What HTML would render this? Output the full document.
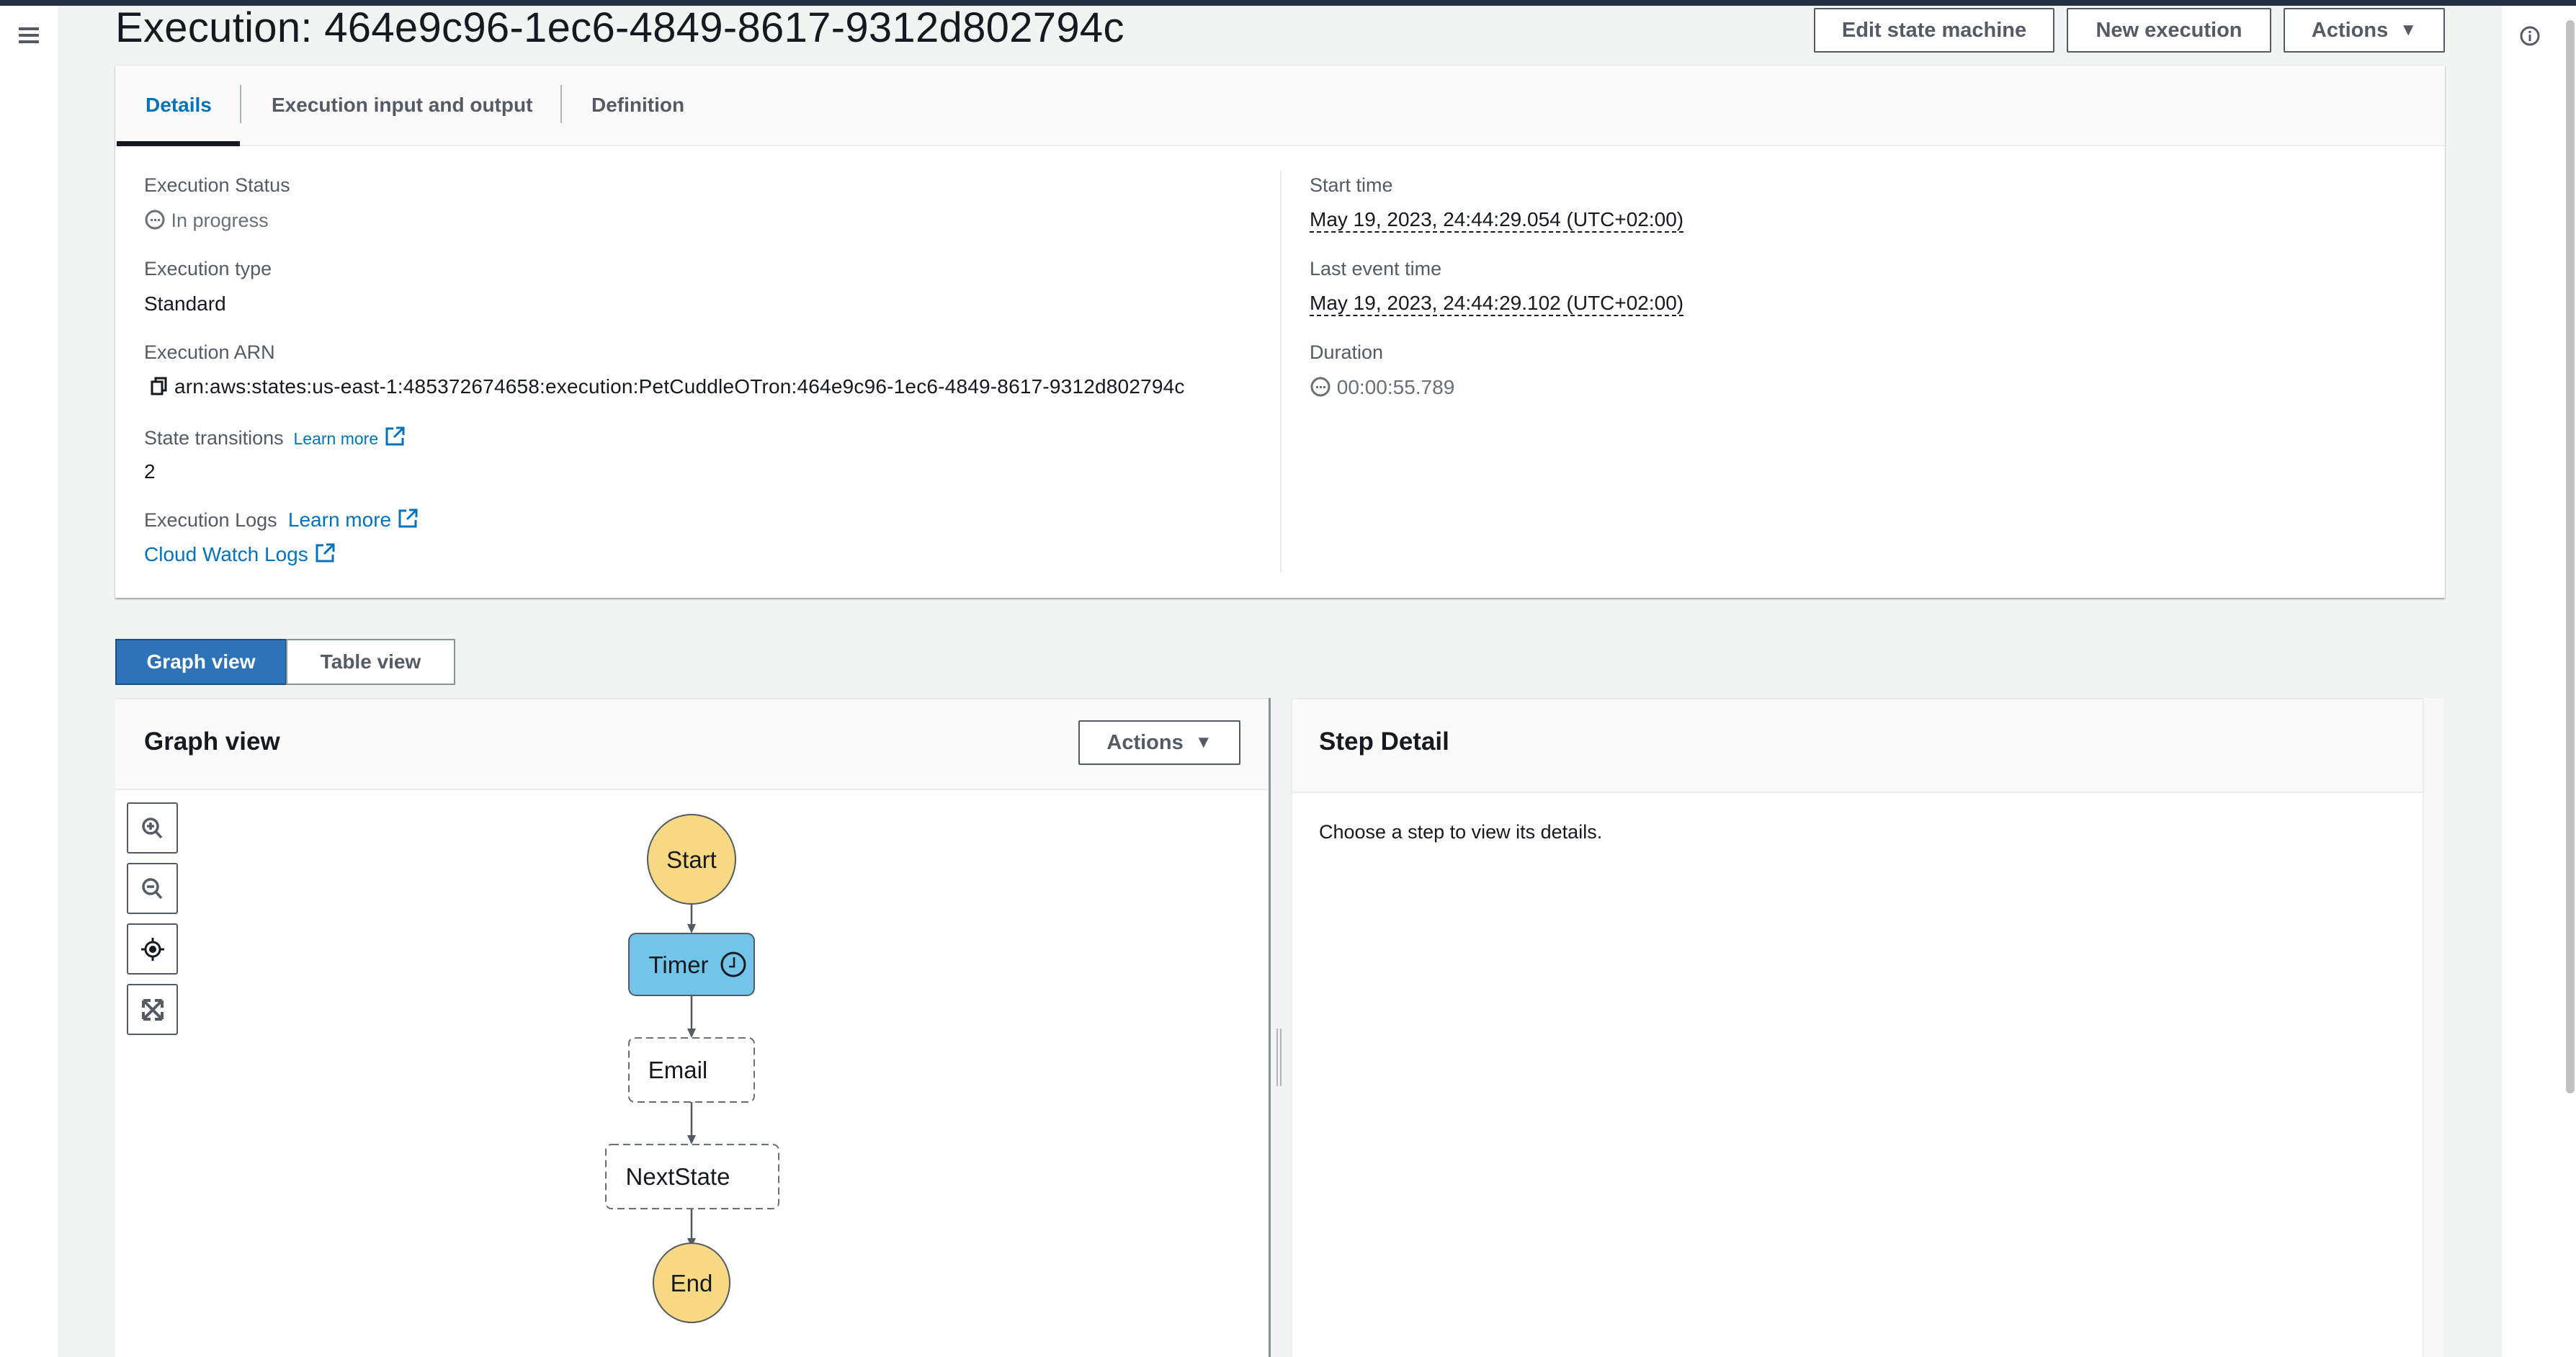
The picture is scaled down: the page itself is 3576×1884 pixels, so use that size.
<!DOCTYPE html>
<html><head><meta charset="utf-8"><style>
*{margin:0;padding:0;box-sizing:border-box}
body{width:3576px;height:1884px;overflow:hidden;background:#f2f3f3;font-family:"Liberation Sans",sans-serif;position:relative;color:#16191f}
.a{position:absolute;white-space:nowrap}
.lbl{font-size:27px;color:#545b64}
.val{font-size:28px;color:#16191f}
.link{color:#0073bb}
.btn{position:absolute;background:#fff;border:2px solid #545b64;border-radius:2px;color:#545b64;font-weight:bold;font-size:29px;display:flex;align-items:center;justify-content:center}
.dash{border-bottom:2px dashed #16191f}
</style></head><body>
<div class="a" style="left:0;top:0;width:3576px;height:8px;background:#232f3e"></div>
<div class="a" style="left:0;top:8px;width:80px;height:1876px;background:#fff"></div>
<svg class="a" style="left:26px;top:36px" width="28" height="26"><rect x="0" y="2" width="28" height="4" fill="#545b64"/><rect x="0" y="11" width="28" height="4" fill="#545b64"/><rect x="0" y="20" width="28" height="4" fill="#545b64"/></svg>
<div class="a" style="left:3473px;top:8px;width:103px;height:1876px;background:#fff"></div>
<div class="a" style="left:3562px;top:28px;width:12px;height:1490px;background:#c1c1c1;border-radius:6px"></div>
<svg class="a" style="left:3496px;top:34px" width="32" height="32"><circle cx="16" cy="16" r="12" fill="none" stroke="#545b64" stroke-width="3"/><rect x="14.5" y="14" width="3" height="9" fill="#545b64"/><rect x="14.5" y="9" width="3" height="3" fill="#545b64"/></svg>

<div class="a" style="left:160px;top:5px;font-size:58px;letter-spacing:0.3px;color:#16191f">Execution: 464e9c96-1ec6-4849-8617-9312d802794c</div>
<div class="btn" style="left:2518px;top:11px;width:334px;height:62px">Edit state machine</div>
<div class="btn" style="left:2869px;top:11px;width:284px;height:62px">New execution</div>
<div class="btn" style="left:3170px;top:11px;width:224px;height:62px">Actions&nbsp;&nbsp;<span style="font-size:24px">▼</span></div>

<div class="a" style="left:160px;top:91px;width:3234px;height:739px;background:#fff;box-shadow:0 2px 2px rgba(0,0,0,.3),0 0 1px rgba(0,0,0,.2)"></div>
<div class="a" style="left:160px;top:91px;width:3234px;height:112px;background:#fafafa;border-bottom:2px solid #eaeded"></div>
<div class="a" style="left:162px;top:196px;width:171px;height:7px;background:#16191f"></div>
<div class="a" style="left:333px;top:118px;width:2px;height:53px;background:#aab7b8"></div>
<div class="a" style="left:778px;top:118px;width:2px;height:53px;background:#aab7b8"></div>
<div class="a" style="left:202px;top:130px;font-size:28px;font-weight:bold;color:#0073bb">Details</div>
<div class="a" style="left:377px;top:130px;font-size:28px;font-weight:bold;color:#545b64">Execution input and output</div>
<div class="a" style="left:821px;top:130px;font-size:28px;font-weight:bold;color:#545b64">Definition</div>
<div class="a" style="left:1777px;top:238px;width:2px;height:556px;background:#eaeded"></div>

<div class="a lbl" style="left:200px;top:242px">Execution Status</div>
<div class="a lbl" style="left:200px;top:290px;color:#687078"><svg style="vertical-align:-5px" width="30" height="30"><circle cx="15" cy="15" r="12" fill="none" stroke="#687078" stroke-width="3"/><rect x="9" y="14" width="3" height="3" fill="#687078"/><rect x="14" y="14" width="3" height="3" fill="#687078"/><rect x="19" y="14" width="3" height="3" fill="#687078"/></svg> In progress</div>
<div class="a lbl" style="left:200px;top:358px">Execution type</div>
<div class="a val" style="left:200px;top:406px">Standard</div>
<div class="a lbl" style="left:200px;top:474px">Execution ARN</div>
<div class="a val" style="left:208px;top:521px;font-size:28px;letter-spacing:0.2px"><svg style="vertical-align:-4px" width="26" height="28"><rect x="3" y="8" width="14" height="17" fill="none" stroke="#16191f" stroke-width="3"/><path d="M8 8V3h14v17h-5" fill="none" stroke="#16191f" stroke-width="3"/></svg> arn:aws:states:us-east-1:485372674658:execution:PetCuddleOTron:464e9c96-1ec6-4849-8617-9312d802794c</div>
<div class="a lbl" style="left:200px;top:591px">State transitions <span class="link" style="font-size:23px">&nbsp;Learn more</span> <svg style="vertical-align:-4px" width="30" height="30"><path d="M13 4H4v22h22v-9" fill="none" stroke="#0073bb" stroke-width="3"/><path d="M17 3h10v10M27 3L14 16" fill="none" stroke="#0073bb" stroke-width="3"/></svg></div>
<div class="a val" style="left:200px;top:639px">2</div>
<div class="a lbl" style="left:200px;top:705px">Execution Logs <span class="link" style="font-size:28px">&nbsp;Learn more</span> <svg style="vertical-align:-4px" width="30" height="30"><path d="M13 4H4v22h22v-9" fill="none" stroke="#0073bb" stroke-width="3"/><path d="M17 3h10v10M27 3L14 16" fill="none" stroke="#0073bb" stroke-width="3"/></svg></div>
<div class="a val link" style="left:200px;top:753px">Cloud Watch Logs <svg style="vertical-align:-4px" width="30" height="30"><path d="M13 4H4v22h22v-9" fill="none" stroke="#0073bb" stroke-width="3"/><path d="M17 3h10v10M27 3L14 16" fill="none" stroke="#0073bb" stroke-width="3"/></svg></div>

<div class="a lbl" style="left:1818px;top:242px">Start time</div>
<div class="a val dash" style="left:1818px;top:289px">May 19, 2023, 24:44:29.054 (UTC+02:00)</div>
<div class="a lbl" style="left:1818px;top:358px">Last event time</div>
<div class="a val dash" style="left:1818px;top:405px">May 19, 2023, 24:44:29.102 (UTC+02:00)</div>
<div class="a lbl" style="left:1818px;top:474px">Duration</div>
<div class="a lbl" style="left:1818px;top:522px;color:#687078;font-size:28px"><svg style="vertical-align:-5px" width="30" height="30"><circle cx="15" cy="15" r="12" fill="none" stroke="#687078" stroke-width="3"/><rect x="9" y="14" width="3" height="3" fill="#687078"/><rect x="14" y="14" width="3" height="3" fill="#687078"/><rect x="19" y="14" width="3" height="3" fill="#687078"/></svg> 00:00:55.789</div>

<div class="a" style="left:160px;top:887px;width:238px;height:64px;background:#2e72b8;border:2px solid #1d4f86;color:#fff;font-weight:bold;font-size:28px;display:flex;align-items:center;justify-content:center">Graph view</div>
<div class="a" style="left:397px;top:887px;width:235px;height:64px;background:#fff;border:2px solid #879596;color:#545b64;font-weight:bold;font-size:28px;display:flex;align-items:center;justify-content:center">Table view</div>

<div class="a" style="left:160px;top:969px;width:1603px;height:915px;background:#fff;border-top:2px solid #eaeded"></div>
<div class="a" style="left:160px;top:969px;width:1603px;height:128px;background:#fafafa;border-bottom:2px solid #eaeded;border-top:2px solid #eaeded"></div>
<div class="a" style="left:1761px;top:969px;width:3px;height:915px;background:#879596"></div>
<div class="a" style="left:200px;top:1010px;font-size:35px;font-weight:bold">Graph view</div>
<div class="btn" style="left:1497px;top:1000px;width:225px;height:62px">Actions&nbsp;&nbsp;<span style="font-size:24px">▼</span></div>
<div class="a" style="left:1772px;top:1428px;width:2px;height:80px;background:#aab7b8"></div>
<div class="a" style="left:1777px;top:1428px;width:2px;height:80px;background:#aab7b8"></div>

<div class="a" style="left:176px;top:1114px;width:71px;height:71px;background:#fff;border:2px solid #545b64;border-radius:3px"></div>
<div class="a" style="left:176px;top:1198px;width:71px;height:71px;background:#fff;border:2px solid #545b64;border-radius:3px"></div>
<div class="a" style="left:176px;top:1282px;width:71px;height:71px;background:#fff;border:2px solid #545b64;border-radius:3px"></div>
<div class="a" style="left:176px;top:1366px;width:71px;height:71px;background:#fff;border:2px solid #545b64;border-radius:3px"></div>
<svg class="a" style="left:196px;top:1134px" width="32" height="32"><circle cx="13" cy="13" r="10" fill="none" stroke="#545b64" stroke-width="3.5"/><path d="M20 20l8 9M13 8v10M8 13h10" stroke="#545b64" stroke-width="3.5"/></svg>
<svg class="a" style="left:196px;top:1218px" width="32" height="32"><circle cx="13" cy="13" r="10" fill="none" stroke="#545b64" stroke-width="3.5"/><path d="M20 20l8 9M8 13h10" stroke="#545b64" stroke-width="3.5"/></svg>
<svg class="a" style="left:194px;top:1300px" width="36" height="36"><circle cx="18" cy="18" r="10" fill="none" stroke="#16191f" stroke-width="3"/><circle cx="18" cy="18" r="5" fill="#16191f"/><path d="M18 2v6M18 28v6M2 18h6M28 18h6" stroke="#16191f" stroke-width="3"/></svg>
<svg class="a" style="left:197px;top:1387px" width="30" height="30"><path d="M2 2h10M2 2v10M28 2h-10M28 2v10M2 28h10M2 28v-10M28 28h-10M28 28v-10M3 3l24 24M27 3L3 27" fill="none" stroke="#545b64" stroke-width="4"/></svg>

<svg class="a" style="left:800px;top:1120px" width="330" height="740">
<g stroke="#545b64" stroke-width="2.5" fill="none">
<path d="M160 135V168"/>
<path d="M160 262V312"/>
<path d="M160 410V460"/>
<path d="M160 558V604"/>
</g>
<g fill="#545b64">
<path d="M154 163L166 163L160 176z"/>
<path d="M154 308L166 308L160 321z"/>
<path d="M154 456L166 456L160 469z"/>
<path d="M154 599L166 599L160 612z"/>
</g>
<ellipse cx="160" cy="73" rx="61" ry="62" fill="#f7d883" stroke="#545b64" stroke-width="2"/>
<rect x="73" y="176" width="174" height="86" rx="10" fill="#72c5e8" stroke="#545b64" stroke-width="2"/>
<rect x="73" y="321" width="174" height="89" rx="8" fill="#fff" stroke="#687078" stroke-width="2" stroke-dasharray="10 6"/>
<rect x="41" y="469" width="240" height="89" rx="8" fill="#fff" stroke="#687078" stroke-width="2" stroke-dasharray="10 6"/>
<ellipse cx="160" cy="661" rx="53" ry="55" fill="#f7d883" stroke="#545b64" stroke-width="2"/>
<g font-family="Liberation Sans, sans-serif" font-size="33" fill="#16191f" text-anchor="middle">
<text x="160" y="85">Start</text>
<text x="142" y="231">Timer</text>
<text x="141" y="377">Email</text>
<text x="141" y="525">NextState</text>
<text x="160" y="673">End</text>
</g>
<circle cx="218" cy="219" r="16" fill="none" stroke="#16191f" stroke-width="3"/>
<path d="M219 209v13h-7" fill="none" stroke="#16191f" stroke-width="2.5"/>
</svg>

<div class="a" style="left:1792px;top:969px;width:1573px;height:915px;background:#fff;border:2px solid #eaeded;border-bottom:none"></div>
<div class="a" style="left:1792px;top:969px;width:1573px;height:132px;background:#fafafa;border:2px solid #eaeded"></div>
<div class="a" style="left:3365px;top:969px;width:27px;height:915px;background:#f8f8f8"></div>
<div class="a" style="left:1831px;top:1010px;font-size:35px;font-weight:bold">Step Detail</div>
<div class="a val" style="left:1831px;top:1140px;font-size:27px">Choose a step to view its details.</div>
</body></html>
